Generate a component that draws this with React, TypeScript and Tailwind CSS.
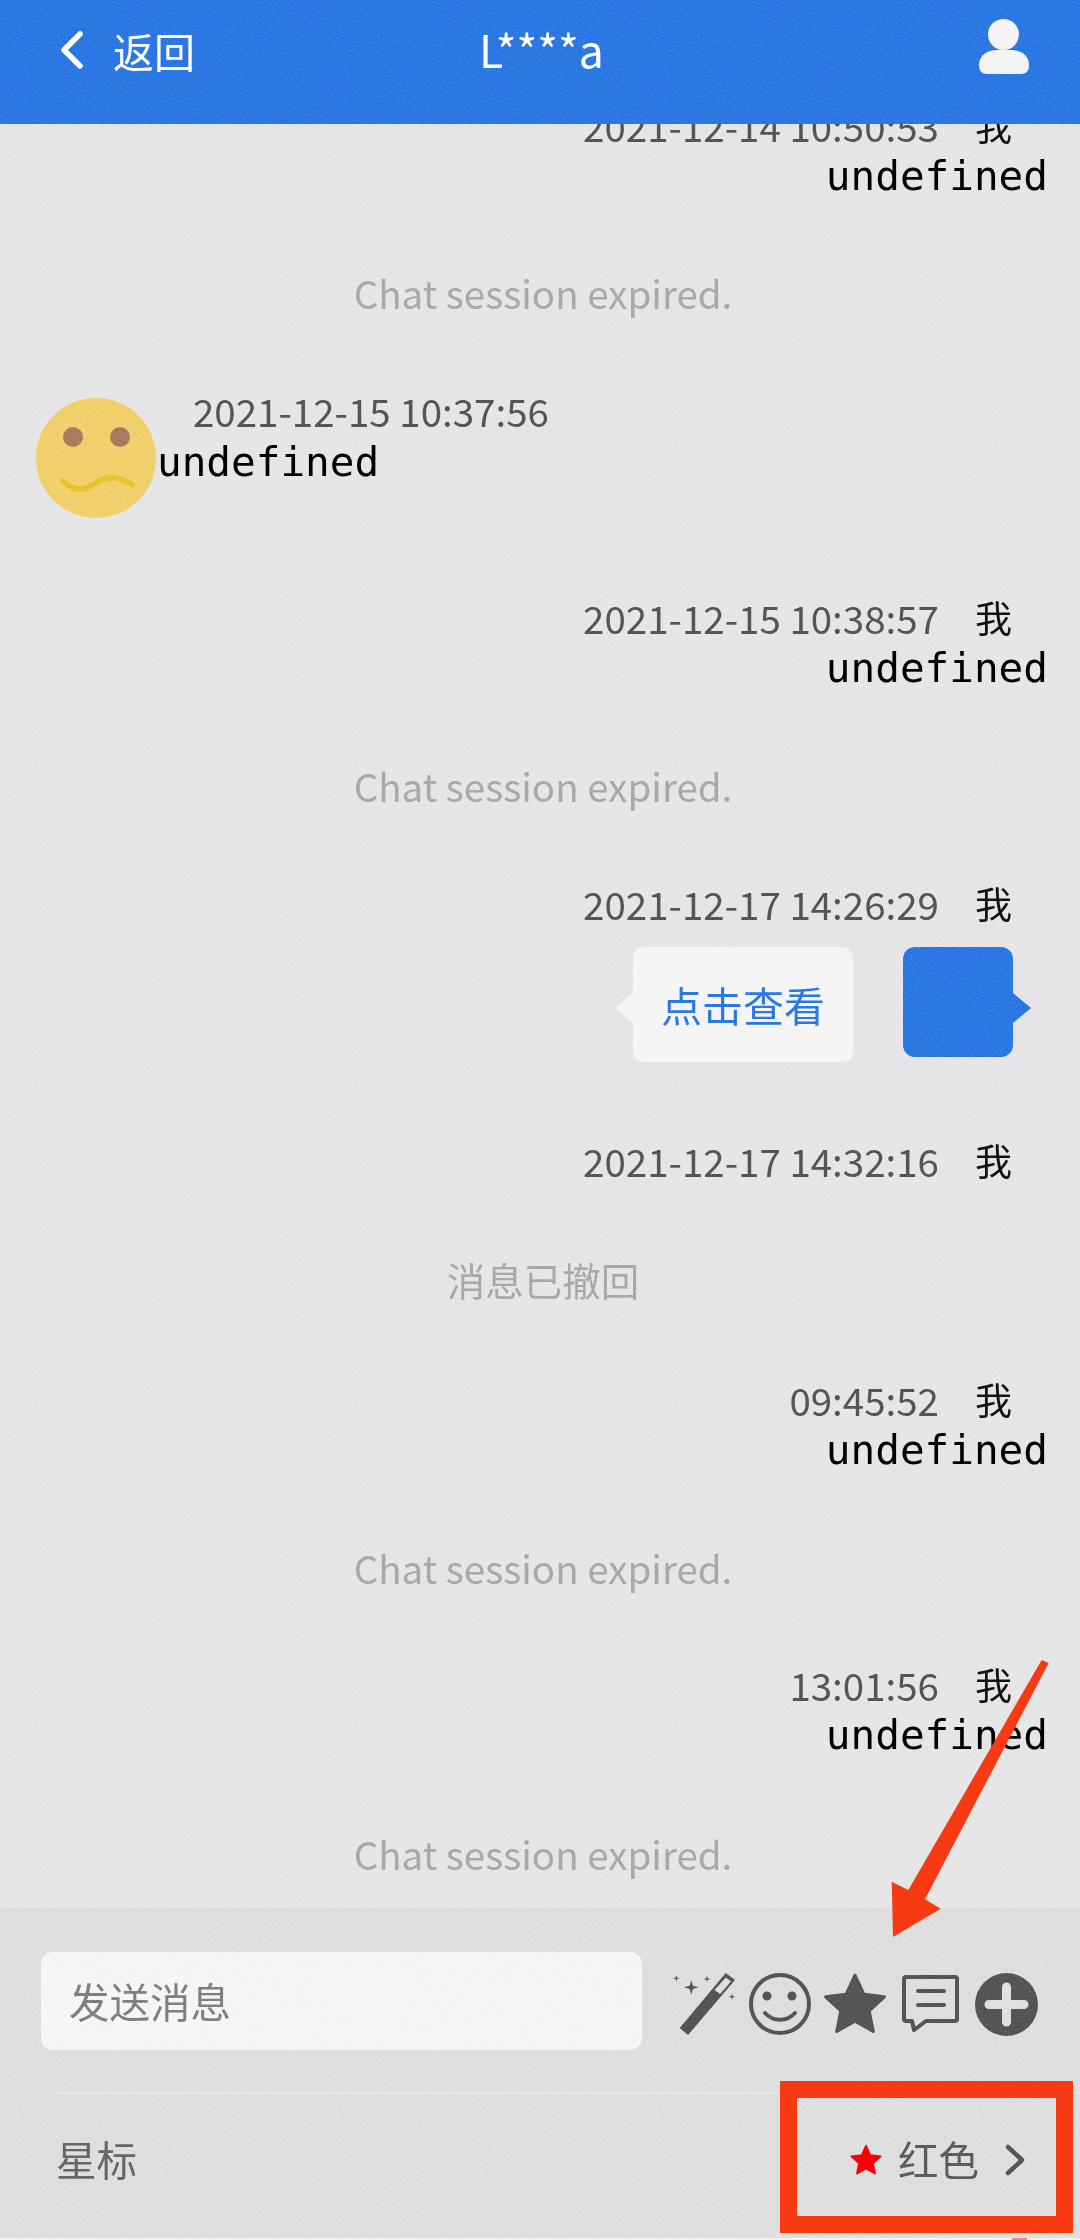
import type { ReactNode } from "react";

const cjk = "font-['Noto_Sans_CJK_SC','Noto_Sans',sans-serif]";

function Stamp({ time, className = "" }: { time: string; className?: string }) {
  return (
    <div className={`flex h-[48px] items-center justify-end pb-[6px] pr-[68px] leading-none ${className}`}>
      <span className="text-[38.500px] text-[#555555]">{time}</span>
      <span className="ml-[36px] text-[37px] text-[#111111]">我</span>
    </div>
  );
}

function Mono({ children, className = "" }: { children: ReactNode; className?: string }) {
  return (
    <div className={`flex h-[48px] items-center font-['DejaVu_Sans_Mono',monospace] text-[41px] leading-none text-black ${className}`}>
      {children}
    </div>
  );
}

function Undefined() {
  return <Mono className="justify-end pr-[32px]">undefined</Mono>;
}

function Notice({ text, className = "" }: { text: string; className?: string }) {
  return <div className={`flex h-[48px] items-center justify-center pb-[4px] pl-[6px] text-[38.500px] leading-none text-[#a9a9a9] ${className}`}>{text}</div>;
}

function SadFace() {
  return (
    <svg width="120" height="120" viewBox="0 0 120 120" className="shrink-0">
      <circle cx="60" cy="60" r="60" fill="#f2d06b" />
      <circle cx="37" cy="39" r="10" fill="#a87c5f" />
      <circle cx="84" cy="39" r="10" fill="#a87c5f" />
      <path d="M27 83c9 9 19 10 28 5s15-10 25-8 12 4 16 7" fill="none" stroke="#e8c42a" strokeWidth="5.500" strokeLinecap="round" />
    </svg>
  );
}

function Wand() {
  return (
    <svg width="62" height="62" viewBox="0 0 62 62" fill="#555555">
      <path d="M6.700 55L15 62 62 7 52.700 0zM52.800 4.500L58 8.500 47 21l-5.500-4z" fillRule="evenodd" />
      <path d="M18.300 7l1.600 5.700 5.700 1.600-5.700 1.600-1.600 5.700-1.600-5.700L11 14.300l5.700-1.600z" />
      <path d="M3.300 2l.7 2.600 2.600.7-2.600.7-.7 2.600-.7-2.600L0 5.300l2.600-.7zM34 2.700l.7 2.600 2.600.7-2.600.7-.7 2.600-.7-2.600-2.600-.7 2.600-.7zM59 20.400l.7 2.600 2.300.7-2.300.7-.7 2.600-.7-2.600-2.600-.7 2.600-.7z" />
    </svg>
  );
}

function Smile() {
  return (
    <svg width="62" height="62" viewBox="0 0 62 62" fill="none">
      <circle cx="31" cy="31" r="29" stroke="#555555" strokeWidth="4" />
      <circle cx="18" cy="23" r="4.500" fill="#555555" />
      <circle cx="43" cy="23" r="4.500" fill="#555555" />
      <path d="M16 40c8 9 22 9 30 0" stroke="#555555" strokeWidth="4" strokeLinecap="round" />
    </svg>
  );
}

function Star({ size, color }: { size: number; color: string }) {
  return (
    <svg width={size} height={size} viewBox="0 0 62 62" fill={color} stroke={color} strokeWidth="3" strokeLinejoin="round">
      <path d="M31 3l8.500 18.500 20 2.500-14.800 13.600 4 20L31 47.500 13.300 57.600l4-20L2.500 24l20-2.500z" />
    </svg>
  );
}

function Note() {
  return (
    <svg width="57" height="58" viewBox="0 0 57 58" fill="none" stroke="#555555" strokeWidth="4" strokeLinejoin="round">
      <path d="M4 2h49a2 2 0 0 1 2 2v40a2 2 0 0 1-2 2H24l-12 9-2-9H4a2 2 0 0 1-2-2V4a2 2 0 0 1 2-2z" />
      <path d="M16 16h26M16 30h26" strokeLinecap="round" />
    </svg>
  );
}

function Plus() {
  return (
    <svg width="63" height="63" viewBox="0 0 63 63">
      <circle cx="31.500" cy="31.500" r="31.500" fill="#555555" />
      <path d="M31.500 14v35M14 31.500h35" stroke="#e0e0e0" strokeWidth="9" strokeLinecap="round" />
    </svg>
  );
}

function BubbleTail({ color, flip = false }: { color: string; flip?: boolean }) {
  return (
    <svg width="18" height="30" viewBox="0 0 18 30" className={`absolute top-[46px] ${flip ? "left-[-18px]" : "right-[-18px]"}`}>
      <path d={flip ? "M18 0L0 15l18 15z" : "M0 0l18 15L0 30z"} fill={color} />
    </svg>
  );
}

export default function App() {
  return (
    <div className={`relative flex h-[2240px] w-[1080px] flex-col overflow-hidden bg-[#e6e6e8] ${cjk}`}>
      {/* Header */}
      <header className="z-10 flex h-[124px] shrink-0 items-start bg-[#2b78e4] pt-[16px] text-white">
        <div className="flex h-[68px] flex-1 items-center pl-[60px]">
          <svg width="24" height="38" viewBox="0 0 24 38" fill="none" stroke="white" strokeWidth="5.500" strokeLinecap="round" strokeLinejoin="round">
            <path d="M20 3L4 19l16 16" />
          </svg>
          <span className="ml-[29px] text-[41px] leading-none">返回</span>
        </div>
        <div className="-ml-[6px] flex h-[68px] items-center pb-[2px] text-[44.500px] leading-none">L****a</div>
        <div className="flex flex-1 justify-end pr-[51px] pt-[3px]">
          <svg width="50" height="55" viewBox="0 0 50 55" fill="#f4f4f4">
            <circle cx="24.500" cy="15.500" r="15.500" />
            <path d="M0 46c0-10 9-15 18-15h14c9 0 18 5 18 15 0 6-3 9-8 9H8c-5 0-8-3-8-9z" />
          </svg>
        </div>
      </header>

      {/* Messages */}
      <main className="min-h-0 flex-1 overflow-hidden">
        <Stamp time="2021-12-14 10:50:53" className="-mt-[20px]" />
        <Undefined />
        <Notice text="Chat session expired." className="mt-[70px]" />

        <div className="mt-[80px] flex h-[120px] pl-[36px]">
          <SadFace />
          <div className="-mt-[9px] pl-[1px]">
            <div className="ml-[36px] flex h-[48px] items-center pb-[6px] text-[38.500px] leading-none text-[#555555]">2021-12-15 10:37:56</div>
            <Mono className="pt-[2px]">undefined</Mono>
          </div>
        </div>

        <Stamp time="2021-12-15 10:38:57" className="mt-[78px]" />
        <Undefined />
        <Notice text="Chat session expired." className="mt-[71px]" />

        <Stamp time="2021-12-17 14:26:29" className="mt-[71px]" />
        <div className="mt-[17px] flex h-[115px] items-start justify-end gap-[50px] pr-[67px]">
          <div className="relative flex h-[115px] w-[220px] items-center justify-center rounded-[10px] bg-[#f5f5f6] text-[41px] leading-none text-[#2b78e4]">
            <BubbleTail color="#f5f5f6" flip />
            点击查看
          </div>
          <div className="relative h-[110px] w-[110px] rounded-[12px] bg-[#2b78e4]">
            <BubbleTail color="#2b78e4" />
          </div>
        </div>

        <Stamp time="2021-12-17 14:32:16" className="mt-[77px]" />
        <Notice text="消息已撤回" className="mt-[70px]" />

        <Stamp time="09:45:52" className="mt-[73px]" />
        <Undefined />
        <Notice text="Chat session expired." className="mt-[71px]" />

        <Stamp time="13:01:56" className="mt-[70px]" />
        <Undefined />
        <Notice text="Chat session expired." className="mt-[72px]" />
      </main>

      {/* Composer */}
      <footer className="h-[330px] shrink-0 bg-[#dfdfdf]">
        <div className="flex h-[184px] items-start pl-[41px] pt-[44px]">
          <div className="flex h-[98px] w-[601px] items-center rounded-[12px] bg-[#f6f6f6] pl-[28px] text-[40.500px] leading-none text-[#808080]">发送消息</div>
          <div className="ml-[31px] mt-[20px] flex items-center">
            <Wand />
            <div className="ml-[14px]"><Smile /></div>
            <div className="ml-[12px]"><Star size={64} color="#555555" /></div>
            <div className="ml-[15px]"><Note /></div>
            <div className="ml-[16px]"><Plus /></div>
          </div>
        </div>
        <div className="ml-[55px] h-[2px] bg-[#e8e8e8]" />
        <div className="flex h-[144px] items-center justify-between pb-[13px] pl-[56px] pr-[59px] text-[40.500px] leading-none text-[#666666]">
          <span>星标</span>
          <span className="flex items-center">
            <Star size={32} color="#fb0007" />
            <span className="ml-[16px] text-[#5c5c5c]">红色</span>
            <svg width="20" height="32" viewBox="0 0 20 32" fill="none" stroke="#555555" strokeWidth="4.500" strokeLinecap="round" strokeLinejoin="round" className="-mr-[4px] ml-[26px]">
              <path d="M3 3l14 13L3 29" />
            </svg>
          </span>
        </div>
      </footer>
      <div className="h-[2px] shrink-0 bg-[#f3f3f3]" />

      {/* Paper grain over the whole shot */}
      <svg className="pointer-events-none absolute inset-0 z-20 opacity-40 mix-blend-overlay" width="1080" height="2240">
        <filter id="grain" colorInterpolationFilters="sRGB">
          <feTurbulence type="fractalNoise" baseFrequency="0.8" numOctaves="2" seed="4" />
          <feColorMatrix values="0.33 0.33 0.33 0 0 0.33 0.33 0.33 0 0 0.33 0.33 0.33 0 0 0 0 0 0 1" />
        </filter>
        <rect width="1080" height="2240" filter="url(#grain)" />
      </svg>

      {/* Red annotations drawn on top of the screenshot */}
      <div className="absolute left-[780px] top-[2081px] z-30 h-[152px] w-[293px] border-[17px] border-[#f73a12]" />
      <div className="absolute left-[1012px] top-[2238px] z-30 h-[2px] w-[15px] bg-[#f08a70]" />
      <svg className="pointer-events-none absolute inset-0 z-30" width="1080" height="2240">
        <polygon points="1041.700,1660 1048.700,1663 925,1899.300 940.700,1908.700 893,1937 891.700,1881.700 908.300,1890" fill="#f73a12" />
      </svg>
    </div>
  );
}
